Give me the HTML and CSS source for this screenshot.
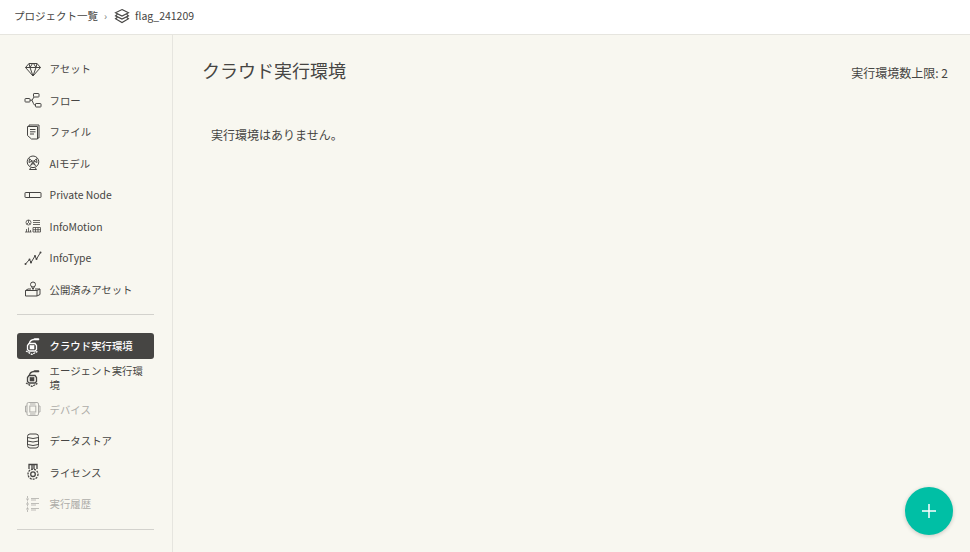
FILE: index.html
```html
<!DOCTYPE html>
<html lang="ja">
<head>
<meta charset="utf-8">
<title>クラウド実行環境</title>
<link rel="stylesheet" href="styles.css">
</head>
<body>
<header class="topbar">
  <span class="crumb">プロジェクト一覧</span>
  <span class="sep">›</span>
  <svg class="stack" viewBox="0 0 16 16"><path d="M8 1.500 14.500 4.800 8 8.100 1.500 4.800Z"/><path d="M3.500 6.300 1.500 7.800 8 11.100 14.500 7.800 12.500 6.300"/><path d="M3.500 9.300 1.500 10.800 8 14.500 14.500 10.800 12.500 9.300"/></svg>
  <span class="crumb">flag_241209</span>
</header>
<div class="main">
  <nav class="side">
    <a class="item"><svg class="ic" viewBox="0 0 18 18"><path d="M5 3.500h8L16.500 7.500 9 16 1.500 7.500Z"/><path d="M1.500 7.500h15M6 7.500 9 16 12 7.500 9.500 3.500h-1ZM5 3.500 6 7.500M13 3.500 12 7.500"/></svg><span>アセット</span></a>
    <a class="item"><svg class="ic" viewBox="0 0 18 18"><rect x="1" y="7.500" width="5" height="3.500" rx=".6"/><rect x="9.500" y="2.500" width="5.500" height="3.500" rx=".6"/><rect x="11.500" y="12.500" width="5.500" height="3.500" rx=".6"/><path d="M6 9.200h2L10 6M8 9.200l1.500 3.500q.5 1.500 2 1.500"/></svg><span>フロー</span></a>
    <a class="item"><svg class="ic" viewBox="0 0 18 18"><path d="M5 3.500V2h10v13h-1.500"/><path d="M3.500 3.500H13.500V16H7.500L3.500 12.500Z"/><path d="M6 6.500h5.500M6 8.800h5.500M6 11h4"/></svg><span>ファイル</span></a>
    <a class="item"><svg class="ic" viewBox="0 0 18 18"><circle cx="9" cy="7.800" r="5.800"/><circle cx="9" cy="7.800" r="1"/><path d="M5.500 4.800 8 7 5 8.500ZM12.500 4.800 10 7l3 1.500ZM6.500 11.500 8.300 8.800l.7.700ZM11.500 11.500 9.700 8.800l-.7.700ZM7 13.500 5.500 15.500h7L11 13.500"/></svg><span>AIモデル</span></a>
    <a class="item"><svg class="ic" viewBox="0 0 18 18"><rect x="1" y="6.500" width="16" height="5" rx=".5"/><path d="M5.500 6.500v5"/></svg><span>Private Node</span></a>
    <a class="item"><svg class="ic fine" viewBox="0 0 18 18"><circle cx="4.500" cy="5.500" r="2.500"/><path d="M4.500 3v2.500l1.800 1.800M4.500 5.500 2.700 7.300M9 3.500h7M9 5.500h7M9 7.500h7M1 15h6.500M2.500 15v-3M4.500 15v-4.500M6.500 15v-2M9 10.500h7.500V15H9ZM9 12.700h7.500M11.500 10.500V15M14 10.500V15"/></svg><span>InfoMotion</span></a>
    <a class="item"><svg class="ic" viewBox="0 0 18 18"><path d="M1.500 15 5.500 10.500l1.500 3L11 7l1.500 3L16.500 3.500"/><path class="dots" d="M1.500 15h0M5.500 10.500h0M7 13.500h0M11 7h0M12.500 10h0M16.500 3.500h0"/></svg><span>InfoType</span></a>
    <a class="item"><svg class="ic" viewBox="0 0 18 18"><circle cx="9" cy="4.500" r="2.500"/><path d="M7.500 6.500 9 9.500l1.500-3M1.500 10.500h11.500V16H1.500ZM13 10.500 16 9v5.500L13 16M1.500 10.500 4 9h3M11 9h5"/></svg><span>公開済みアセット</span></a>
    <hr class="rule first">
    <a class="item active"><svg class="ic heavy" viewBox="0 0 18 18"><path d="M5.500 6q.5-3 4.500-3.500"/><rect class="solid" x="10" y="1.500" width="5" height="1.500" rx=".5"/><path d="M5 6.500h6l1.500 2v4L11 14H5l-1.500-1.500v-4Z"/><rect class="solid" x="6" y="8.500" width="4" height="3.500"/><path d="M2 14l6 3.500 6-3.500" stroke-dasharray="2 .8"/></svg><span>クラウド実行環境</span></a>
    <a class="item"><svg class="ic heavy" viewBox="0 0 18 18"><path d="M5.500 6q.5-3 4.500-3.500"/><rect class="solid" x="10" y="1.500" width="5" height="1.500" rx=".5"/><path d="M5 6.500h6l1.500 2v4L11 14H5l-1.500-1.500v-4Z"/><rect class="solid" x="6" y="8.500" width="4" height="3.500"/><path d="M2 14l6 3.500 6-3.500" stroke-dasharray="2 .8"/></svg><span>エージェント実行環境</span></a>
    <a class="item off"><svg class="ic" viewBox="0 0 18 18"><rect x="3" y="2.500" width="11.500" height="13" rx="1.500"/><rect x="5.800" y="6" width="6" height="6"/><path d="M3 6H1.500v6H3M14.500 6H16v6h-1.500M6 4h5.500M6 14h5.500"/></svg><span>デバイス</span></a>
    <a class="item"><svg class="ic" viewBox="0 0 18 18"><rect x="3.500" y="2" width="11" height="14" rx="2.500"/><path d="M3.500 5.500q5.500 2 11 0M3.500 9q5.500 2 11 0M3.500 12.500q5.500 2 11 0"/></svg><span>データストア</span></a>
    <a class="item"><svg class="ic heavy" viewBox="0 0 18 18"><path d="M5 6V1.500h8V6M8 1.500V6M10 1.500V6"/><circle cx="9" cy="11.200" r="5" stroke-dasharray="2 1"/><circle cx="9" cy="11.200" r="2.300"/></svg><span>ライセンス</span></a>
    <a class="item off"><svg class="ic fine" viewBox="0 0 18 18"><path d="M3.500 1v16" stroke-dasharray="2 .8"/><path d="M2 4h3M2 9h3M2 14h3M7 3.500h8M7 5h5M7 8.500h8M7 10h5M7 13.500h8M7 15h5"/></svg><span>実行履歴</span></a>
    <hr class="rule last">
  </nav>
  <main class="content">
    <div class="head">
      <h1>クラウド実行環境</h1>
      <p class="limit">実行環境数上限: 2</p>
    </div>
    <p class="empty">実行環境はありません。</p>
    <button class="fab" aria-label="追加"><svg viewBox="0 0 14 14"><path d="M7 0v14M0 7h14"/></svg></button>
  </main>
</div>
</body>
</html>
```
FILE: styles.css
```css
* { box-sizing: border-box; }
html, body { margin: 0; height: 100%; overflow: hidden; }
body {
  font-family: "Noto Sans CJK JP", "Noto Sans", sans-serif;
  color: #464543;
  background: #f8f7f0;
  display: flex;
  flex-direction: column;
}
.topbar {
  height: 35px;
  flex: none;
  display: flex;
  align-items: center;
  padding: 0 14px 3px;
  background: #fff;
  border-bottom: 1px solid #e6e5df;
  font-size: 10.500px;
}
.sep { margin: 0 7px 0 6px; font-size: 10px; color: #777; }
.stack { width: 16px; height: 16px; margin-right: 5px; fill: none; stroke: #464543; stroke-width: 1.100; }
.main { flex: 1; display: flex; min-height: 0; }
.side {
  width: 173px;
  flex: none;
  padding: 20.800px 18px 0 17px;
  border-right: 1px solid #e6e5df;
  display: flex;
  flex-direction: column;
  gap: 5.500px;
}
.item {
  min-height: 26px;
  display: flex;
  align-items: center;
  gap: 7.600px;
  padding: 0 7px;
  border-radius: 3px;
  font-size: 10.400px;
  line-height: 13.300px;
}
.ic {
  width: 18px;
  height: 18px;
  flex: none;
  fill: none;
  stroke: currentColor;
  stroke-width: 1;
}
.ic.fine { stroke-width: .8; }
.ic.heavy { stroke-width: 1.300; }
.ic .solid { fill: currentColor; stroke-width: .6; }
.ic .dots { stroke-width: 2; stroke-linecap: round; }
.active { background: #464543; color: #fff; font-weight: 500; }
.off { color: #aeada9; }
.rule { width: 100%; margin: 0; border: 0; border-top: 1px solid #d3d2cd; flex: none; }
.rule.first { margin: 6px 0 12.500px; }
.rule.last { margin: 6.700px 0 0; }
.content { flex: 1; position: relative; padding: 21px 22px 0 29px; }
.head { display: flex; justify-content: space-between; align-items: flex-start; }
h1 { margin: 0; font-size: 18px; font-weight: 400; line-height: 28px; }
.limit { margin: 8px 0 0; font-size: 12px; line-height: 18px; }
.empty { margin: 42px 0 0 9px; font-size: 12px; line-height: 18px; }
.fab {
  position: absolute;
  right: 17px;
  bottom: 17px;
  width: 48px;
  height: 48px;
  padding: 0;
  border: 0;
  border-radius: 50%;
  background: #00bfa5;
  display: flex;
  align-items: center;
  justify-content: center;
  box-shadow: 0 1px 4px rgba(0, 0, 0, .2);
}
.fab svg { width: 14px; height: 14px; fill: none; stroke: #fff; stroke-width: 1.500; }
```
